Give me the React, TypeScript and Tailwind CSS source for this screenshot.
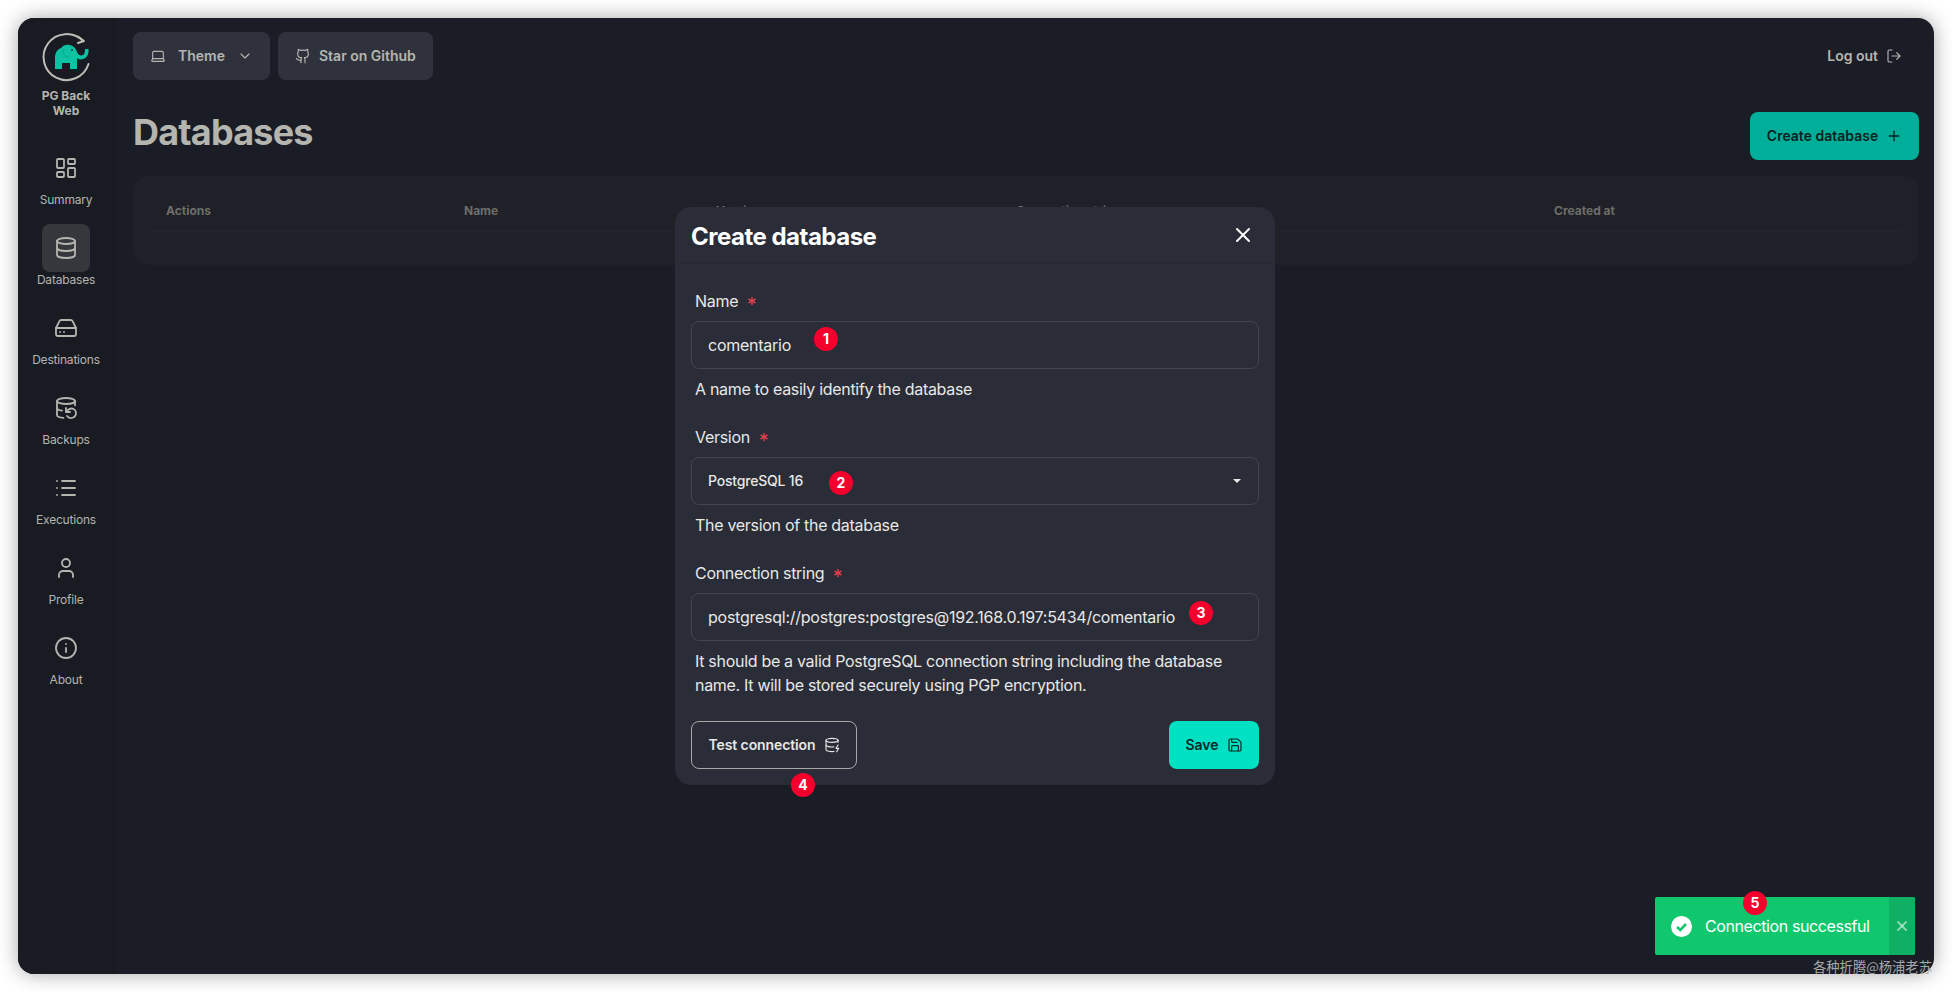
import { Asterisk, ChevronDown, Database, DatabaseBackup, DatabaseZap, Github, HardDrive, Info, Laptop, LayoutDashboard, List, LogOut, Plus, Save, User, X } from "lucide-react";

const navItems = [
  { label: "Summary", icon: LayoutDashboard },
  { label: "Databases", icon: Database, active: true },
  { label: "Destinations", icon: HardDrive },
  { label: "Backups", icon: DatabaseBackup },
  { label: "Executions", icon: List },
  { label: "Profile", icon: User },
  { label: "About", icon: Info },
];

function Logo() {
  return (
    <svg width="52" height="52" viewBox="40 32 52 52" fill="none">
      <path d="M88.5 64 A23 23 0 1 1 83 41" stroke="#bdbdb8" strokeWidth="2" strokeLinecap="round" />
      <path d="M78 36.5 L84 41 L78 43" stroke="#bdbdb8" strokeWidth="2" strokeLinecap="round" strokeLinejoin="round" />
      <path
        d="M55 69 V58 C55 52 58 49 61 48 C63 45 67 44 70 45 C74 46 76 49 77 52 C78 55 81 56 83 55 C85 54 85 51 85 49 L88.5 49 C89 54 87 58 83 59 C80 60 78 59 77 58 V69 H70 V63 H62 V69 Z"
        fill="#0dc2a3"
      />
      <path d="M64 49 C62 53 64 57 69 57" stroke="#0aa58b" strokeWidth="1" />
      <circle cx="72" cy="50" r="0.9" fill="#17342f" />
    </svg>
  );
}

function Sidebar() {
  return (
    <aside className="flex w-[99px] shrink-0 flex-col items-center bg-[#181b22] pt-[14px] pr-[3px]">
      <Logo />
      <div className="mt-1 w-[60px] text-center text-xs leading-[15px] font-bold text-[#b5b5b0]">PG Back Web</div>
      <nav className="mt-[26px] flex flex-col gap-4">
        {navItems.map((n) => (
          <div key={n.label} className="flex h-16 w-[80px] flex-col items-center text-xs leading-4 tracking-[-0.2px] text-[#b5b5b0]">
            <div className={n.active ? "flex size-12 items-center justify-center rounded-lg bg-[#35373d]" : "flex size-12 items-center justify-center"}>
              <n.icon className="size-6" strokeWidth={1.8} />
            </div>
            <span>{n.label}</span>
          </div>
        ))}
      </nav>
    </aside>
  );
}

function Main() {
  const topBtn = "flex h-12 items-center rounded-lg bg-[#2f323c] text-sm font-semibold text-[#b5b5b0]";
  return (
    <main className="flex min-w-0 flex-1 flex-col pt-[14px] pr-[15px] pl-4">
      <header className="flex items-center justify-between">
        <div className="flex gap-2">
          <div className={`${topBtn} w-[137px] pl-[17px]`}>
            <Laptop className="size-4" strokeWidth={1.7} />
            <span className="ml-[12px]">Theme</span>
            <ChevronDown className="ml-3 size-4" strokeWidth={1.7} />
          </div>
          <div className={`${topBtn} w-[155px] gap-2 pl-[17px]`}>
            <Github className="size-4" strokeWidth={1.7} />
            <span>Star on Github</span>
          </div>
        </div>
        <div className="flex items-center gap-2 pr-[17px] pl-4 text-sm font-semibold text-[#b5b5b0]">
          <span>Log out</span>
          <LogOut className="size-4" strokeWidth={1.7} />
        </div>
      </header>
      <div className="mt-8 flex items-start justify-between">
        <h1 className="text-4xl font-bold tracking-[-0.8px] text-[#b5b5b0]">Databases</h1>
        <div className="flex h-12 w-[169px] items-center justify-center gap-2 rounded-lg bg-[#00ae99] text-sm font-semibold text-[#08231f]">
          Create database
          <Plus className="size-4" strokeWidth={2} />
        </div>
      </div>
      <section className="mt-4 h-[89px] w-[1786px] rounded-2xl bg-[#1f2028] px-4 pt-[16px]">
        <div className="grid h-10 grid-cols-[298px_252px_300px_538px_1fr] items-center border-b border-[#23252d] pb-[1px] pl-[17px] text-xs font-bold text-[#6e6e6a]">
          <span>Actions</span>
          <span>Name</span>
          <span>Version</span>
          <span>Connection string</span>
          <span>Created at</span>
        </div>
      </section>
    </main>
  );
}

function Field({ label, help, children }: { label: string; help: React.ReactNode; children: React.ReactNode }) {
  return (
    <div>
      <div className="mb-1 flex h-8 items-center gap-[7px] px-1 text-base tracking-[-0.3px] text-[#e8e8e6]">
        {label}
        <Asterisk className="size-[14px] text-[#dc3f4c]" strokeWidth={2.5} />
      </div>
      {children}
      <div className="mt-2 px-1 text-base leading-6 tracking-[-0.3px] text-[#e8e8e6]">{help}</div>
    </div>
  );
}

function Modal() {
  const inputCls = "h-12 w-full rounded-lg border border-[#42444f] bg-[#2a2c37] px-4 text-base tracking-[-0.25px] text-[#e8e8e6] outline-none";
  return (
    <div className="absolute top-[189px] left-[657px] flex h-[578px] w-[600px] flex-col rounded-2xl bg-[#2a2c37]">
      <div className="flex h-[57px] items-center justify-between border-b border-[#262832] pr-5 pl-4">
        <h2 className="pt-[3px] text-2xl font-bold tracking-[-0.5px] text-white">Create database</h2>
        <X className="size-6 text-white" strokeWidth={2} />
      </div>
      <div className="flex flex-col gap-5 px-4 pt-[21px]">
        <Field label="Name" help="A name to easily identify the database">
          <input readOnly value="comentario" className={inputCls} />
        </Field>
        <Field label="Version" help="The version of the database">
          <div className="flex h-12 w-full items-center justify-between rounded-lg border border-[#42444f] pr-[17px] pl-4 text-sm font-medium tracking-[-0.2px] text-[#e8e8e6]">
            PostgreSQL 16
            <span className="size-0 border-x-4 border-t-4 border-x-transparent border-t-[#e8e8e6]" />
          </div>
        </Field>
        <Field
          label="Connection string"
          help={
            <>
              It should be a valid PostgreSQL connection string including the database
              <br />
              name. It will be stored securely using PGP encryption.
            </>
          }
        >
          <input readOnly value="postgresql://postgres:postgres@192.168.0.197:5434/comentario" className={inputCls} />
        </Field>
      </div>
      <div className="mt-6 flex justify-between px-4">
        <div className="flex h-12 w-[166px] items-center justify-center gap-2 rounded-lg border-[1.5px] border-[#a8a8a8] text-sm font-semibold tracking-[-0.1px] text-[#e8e8e6]">
          Test connection
          <DatabaseZap className="size-4" strokeWidth={1.7} />
        </div>
        <div className="flex h-12 w-[90px] items-center justify-center gap-2 rounded-lg bg-[#00e0c2] text-sm font-semibold text-[#062a25]">
          Save
          <Save className="size-4" strokeWidth={1.8} />
        </div>
      </div>
    </div>
  );
}

function Toast() {
  return (
    <div className="absolute top-[879px] left-[1637px] flex h-[58px] w-[260px] overflow-hidden rounded-[2px] bg-[#10c76d] text-white">
      <div className="flex flex-1 items-center pl-4">
        <svg width="21" height="21" viewBox="0 0 21 21">
          <circle cx="10.5" cy="10.5" r="10.5" fill="white" />
          <path d="M6 11 L9.3 14 L15 8" fill="none" stroke="#10c76d" strokeWidth="2.6" />
        </svg>
        <span className="ml-[13px] text-base tracking-[-0.4px]">Connection successful</span>
      </div>
      <div className="flex w-[26px] items-center justify-center bg-[#0fb063]">
        <X className="size-4 text-white/50" strokeWidth={3} />
      </div>
    </div>
  );
}

function Badge({ n, className }: { n: number; className: string }) {
  return <div className={`absolute flex size-6 items-center justify-center rounded-full bg-[#f5002d] text-sm font-bold text-white ${className}`}>{n}</div>;
}

export default function App() {
  return (
    <div className="relative h-[992px] w-[1952px] overflow-hidden bg-white p-[18px] font-['Inter',sans-serif]">
      <div className="relative flex h-[956px] w-[1916px] overflow-hidden rounded-2xl bg-[#1a1d25] shadow-[0_0_20px_rgba(0,0,0,0.35)]">
        <Sidebar />
        <Main />
        <Modal />
        <Toast />
      </div>
      <Badge n={1} className="top-[327px] left-[814px]" />
      <Badge n={2} className="top-[471px] left-[829px]" />
      <Badge n={3} className="top-[601px] left-[1189px]" />
      <Badge n={4} className="top-[773px] left-[791px]" />
      <Badge n={5} className="top-[891px] left-[1743px]" />
      <div className="absolute top-[957px] left-[1813px] font-['Noto_Sans_CJK_SC',sans-serif] text-[13.3px] text-[#a8a8a8]">各种折腾@杨浦老苏</div>
    </div>
  );
}
